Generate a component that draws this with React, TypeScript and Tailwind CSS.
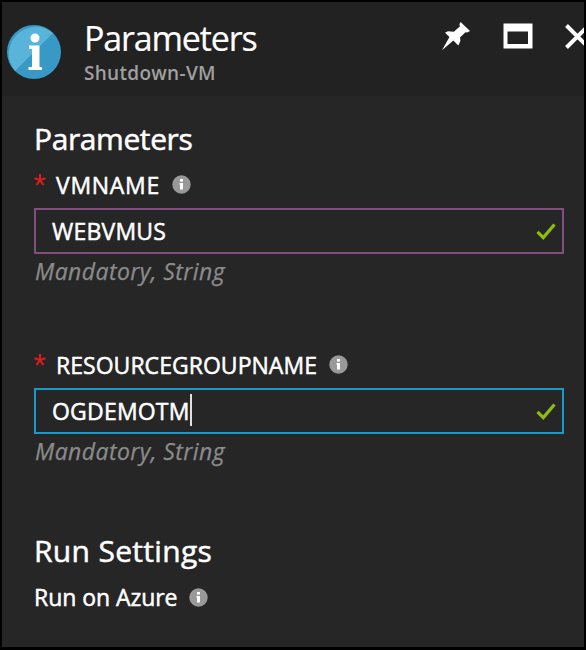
import React from "react";

function InfoDot() {
  return (
    <svg width="19" height="19" viewBox="0 0 19 19" className="shrink-0">
      <circle cx="9.5" cy="9.5" r="9.2" fill="#999999" />
      <rect x="8" y="4" width="3" height="2.600" fill="#fff" />
      <path d="M7.500 8H11v6.500H8V9.500h-.5z" fill="#fff" />
    </svg>
  );
}

function Check() {
  return (
    <svg width="22" height="20" viewBox="0 0 22 20" className="shrink-0">
      <path d="M2.500 10.800l5.800 5.800L19.500 3.500" fill="none" stroke="#8cbd10" strokeWidth="3.200" />
    </svg>
  );
}

type FieldProps = {
  label: string;
  value: string;
  labelClass: string;
  borderClass: string;
  caret?: boolean;
};

function Field({ label, value, labelClass, borderClass, caret }: FieldProps) {
  return (
    <div>
      <div className="flex h-[30px] items-center">
        <svg width="12" height="12" viewBox="0 0 12 12" className="-mt-[8px] mr-[10px] shrink-0">
          <path d="M6 6V0M6 6L.5 4.200M6 6l5.500-1.800M6 6l-3.400 5M6 6l3.400 5" stroke="#dc1c1c" strokeWidth="2.200" />
        </svg>
        <span className={"whitespace-nowrap pt-px text-[23px] leading-[30px] [-webkit-text-stroke:0.5px_white] " + labelClass}>{label}</span>
        <span className="pt-px">
          <InfoDot />
        </span>
      </div>
      <div className={"mt-[9px] flex h-[46px] w-[530px] items-center border-2 pl-4 pr-[5px] " + borderClass}>
        <span className="whitespace-nowrap text-[23px] leading-[42px] tracking-[0.2px] [-webkit-text-stroke:0.5px_white]">{value}</span>
        {caret && <span className="-mt-[2px] h-[32px] w-[2px] bg-[#e0e0e0]" />}
        <span className="ml-auto">
          <Check />
        </span>
      </div>
      <div className="mt-[2px] pl-px text-[23px] italic leading-[30px] tracking-[0.42px] text-[#8b8b8b] [-webkit-text-stroke:0.25px_#8b8b8b]">
        Mandatory, String
      </div>
    </div>
  );
}

export default function App() {
  return (
    <div className="h-[650px] w-[586px] overflow-hidden border-b-[3px] border-l-2 border-r-2 border-t-2 border-black bg-[#262626] font-['Open_Sans','Noto_Sans',sans-serif] text-white">
      <header className="flex h-[94px] overflow-hidden bg-[#222222]">
        <svg width="56" height="56" viewBox="0 0 56 56" className="ml-1 mt-[22px] shrink-0">
          <circle cx="28" cy="28" r="27" fill="#3999c6" />
          <path d="M9 47A27 27 0 0 1 47 9z" fill="#59b4d9" />
          <circle cx="29" cy="14" r="4.500" fill="#fff" />
          <path d="M23 21.500h10.500V43H36v3H22.500v-3H26V25h-3z" fill="#fff" />
        </svg>
        <div className="ml-[22px] w-[358px] shrink-0 pt-[15px]">
          <h1 className="whitespace-nowrap text-[34px] font-normal leading-[42px] tracking-[-1.15px] [-webkit-text-stroke:0.2px_white]">Parameters</h1>
          <p className="whitespace-nowrap text-[19px] font-semibold leading-[28px] tracking-[0.3px] text-[#a0a0a0]">Shutdown-VM</p>
        </div>
        <svg width="29" height="29" viewBox="0 0 30 30" className="mt-5 shrink-0">
          <path d="M19.200 0l9.800 9.200-3 1.700-1.700-.4-5.700 5.600.5 3.300-2.200 5-5.200-5.200L0 29.300l7.700-13.800-4.600-4.300 3-1.600 6.200.5 6.300-5.600-.6-2.100z" fill="#fff" />
        </svg>
        <svg width="30" height="26" viewBox="0 0 30 26" className="ml-[32px] mt-[21px] shrink-0">
          <path fillRule="evenodd" d="M.5.500h29V25.500H.5zM4.500 8.500v12.500h20.500V8.500z" fill="#fff" />
        </svg>
        <svg width="25" height="25" viewBox="0 0 25 25" className="ml-[32px] mt-[22px] shrink-0">
          <path d="M1.500 1.500l22 22M23.500 1.500L1.500 23.500" stroke="#fff" strokeWidth="4" />
        </svg>
      </header>
      <main className="pl-8 pt-[23px]">
        <h2 className="h-[40px] whitespace-nowrap text-[30px] font-normal leading-[40px] tracking-[-0.4px] [-webkit-text-stroke:0.5px_white]">Parameters</h2>
        <div className="mt-[10px]">
          <Field label="VMNAME" value="WEBVMUS" labelClass="tracking-[0.7px] mr-[12px]" borderClass="border-[#804f80]" />
        </div>
        <div className="mt-[63px]">
          <Field label="RESOURCEGROUPNAME" value="OGDEMOTM" labelClass="tracking-[0.030px] mr-[12px]" borderClass="border-[#189bc8]" caret />
        </div>
        <h2 className="mt-[65px] h-[40px] whitespace-nowrap text-[30px] font-normal leading-[40px] tracking-[0.32px] [-webkit-text-stroke:0.5px_white]">Run Settings</h2>
        <div className="mt-[11px] flex h-[30px] items-center">
          <span className="mr-3 whitespace-nowrap text-[23px] leading-[30px] tracking-[-0.050px] [-webkit-text-stroke:0.5px_white]">Run on Azure</span>
          <InfoDot />
        </div>
      </main>
    </div>
  );
}
